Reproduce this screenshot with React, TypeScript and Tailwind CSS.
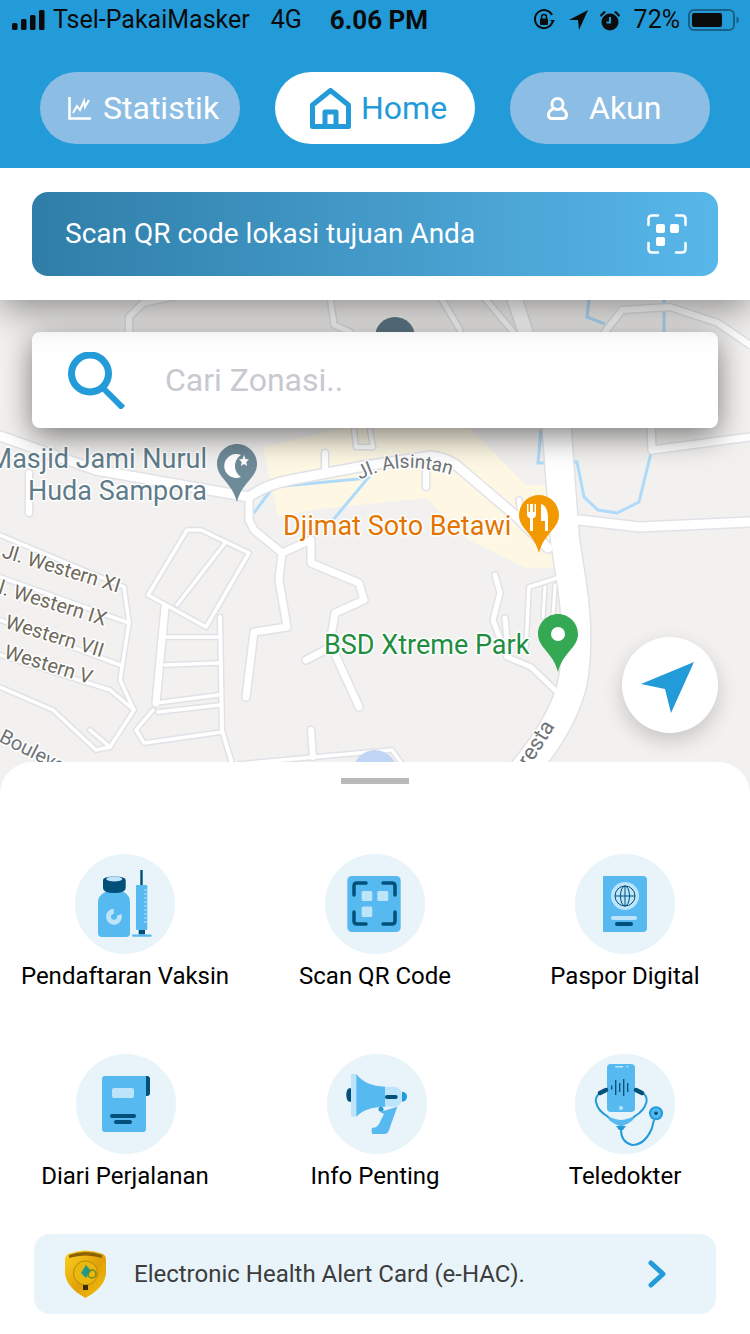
import React from "react";

const BLUE = "#239bd9";
const MID = "#56b9f0";
const DARK = "#01507a";
const LIGHT = "#bde4fb";

type Road = { d: string; w: number };
const roads: Road[] = [
  { d: "M0 436 L96 470 L249 497 Q265 485 290 480 L364 466 L431 456 Q450 458 462 470 L517 517 L548 548", w: 9 },
  { d: "M249 497 L249 520 L254 530 L282 553 L279 580 L287 627 L254 632 L246 697", w: 7 },
  { d: "M282 553 L311 540 L311 563 L359 583 L364 600 L335 613 L330 643 L359 707", w: 7 },
  { d: "M306 660 L335 645", w: 7 },
  { d: "M579 520 L640 527 L750 522", w: 9 },
  { d: "M650 395 L652 450 L750 437", w: 7 },
  { d: "M201 530 L249 553 L206 627 L148 595 L187 530 Z", w: 3.5 },
  { d: "M225 543 L177 605", w: 3.5 },
  { d: "M220 617 L222 730 L234 770", w: 4 },
  { d: "M165 607 L156 703", w: 7 },
  { d: "M165 637 L218 637", w: 3.5 },
  { d: "M165 665 L218 663", w: 3.5 },
  { d: "M156 703 L218 695", w: 3.5 },
  { d: "M158 712 L220 705", w: 3.5 },
  { d: "M153 710 L136 730 L144 743 L222 732", w: 3.5 },
  { d: "M124 587 L129 623 L120 680 L134 710 L110 747 L90 730", w: 3.5 },
  { d: "M0 687 L53 710 L96 750 L110 747", w: 3.5 },
  { d: "M110 690 L134 710", w: 3.5 },
  { d: "M0 535 L124 587", w: 3.5 },
  { d: "M0 577 L129 623", w: 3.5 },
  { d: "M0 620 L120 665", w: 3.5 },
  { d: "M0 655 L110 690", w: 3.5 },
  { d: "M239 764 L392 750 L402 764", w: 3.5 },
  { d: "M311 730 L313 757", w: 6 },
  { d: "M495 575 L500 593 L493 620 L507 657 L531 667 L555 690", w: 5 },
  { d: "M505 618 L507 640", w: 5 },
  { d: "M529 587 L526 647", w: 3.5 },
  { d: "M529 587 L560 577", w: 3.5 },
  { d: "M545 587 L543 617", w: 3 },
  { d: "M555 585 L553 617", w: 3 },
  { d: "M129 340 L129 317 L143 303 L175 296", w: 6 },
  { d: "M330 296 L334 325 L350 332", w: 5 },
  { d: "M440 296 L460 330", w: 5 },
  { d: "M483 296 L520 340", w: 5 },
  { d: "M605 332 L622 310 L670 307 L718 323 L750 345", w: 6 },
  { d: "M354 430 L356 447 L373 447 L370 430", w: 4 },
  { d: "M325 453 L325 467", w: 6 },
  { d: "M426 467 L426 487", w: 6 },
  { d: "M29 473 L29 513", w: 6 },
  { d: "M519 500 L522 520", w: 5 },
  { d: "M515 300 L548 400", w: 14 },
  { d: "M556 420 L565 540 L572 585 Q580 640 573 680 Q565 722 520 775", w: 28 },
];

const Pin = ({ x, y, fill, children }: { x: number; y: number; fill: string; children?: React.ReactNode }) => (
  <g transform={`translate(${x} ${y})`}>
    <path d="M20 0C9 0 0 9 0 20C0 34 15 38 20 58C25 38 40 34 40 20C40 9 31 0 20 0Z" fill={fill} />
    {children}
  </g>
);

const labelStyle = { paintOrder: "stroke", stroke: "#fff", strokeWidth: 3, strokeLinejoin: "round" } as const;

const MapArt = () => (
  <svg className="absolute inset-0 h-full w-full" viewBox="0 300 750 494" fill="none">
    <defs>
      <path id="alsintan" d="M360 480 Q400 458 455 476" />
    </defs>
    <path d="M263 447L344 428H469L526 485H548L557 568H526L469 540L426 498L311 510L278 517Z" fill="#fdf7e4" />
    <path d="M541 430L538 463L577 462L584 497L598 510L617 513L639 502L651 453" stroke="#aedbfb" strokeWidth="3" />
    <path d="M254 513L273 487L368 478L333 520" stroke="#aedbfb" strokeWidth="3" />
    <path d="M589 300L587 317L605 324M664 300V340" stroke="#aedbfb" strokeWidth="3" />
    {roads.map((r, i) => (
      <path key={`o${i}`} d={r.d} stroke="#e1e2e7" strokeWidth={r.w + 3} strokeLinecap="round" strokeLinejoin="round" />
    ))}
    {roads.map((r, i) => (
      <path key={`i${i}`} d={r.d} stroke="#fff" strokeWidth={r.w} strokeLinecap="round" strokeLinejoin="round" />
    ))}
    <circle cx="375" cy="772" r="22" fill="#c0d5f3" />
    <circle cx="395" cy="337" r="20" fill="#5f7a88" />

    <Pin x={217} y={444} fill="#6f8a98">
      <path d="M24 11A12 12 0 1 0 24 33A13 13 0 0 1 24 11Z" fill="#fff" />
      <path d="M27 11L28.500 15L32 15.500L29.300 18L30 22L27 20L24 22L24.700 18L22 15.500L25.500 15Z" fill="#fff" />
    </Pin>
    <Pin x={519} y={495} fill="#f29900">
      <path d="M8 9V19Q8 23 11 23V36H14V23Q17 23 17 19V9H15.500V17H14V9H11V17H9.500V9Z" fill="#fff" />
      <path d="M22 9Q29 11 29 24V36H26V26H22Z" fill="#fff" />
    </Pin>
    <Pin x={538} y={614} fill="#34a853">
      <circle cx="20" cy="20" r="7" fill="#fff" />
    </Pin>

    <g fontFamily="Roboto, sans-serif">
      <text x="207" y="468" textAnchor="end" fontSize="27" fill="#5f7c8a" style={labelStyle}>Masjid Jami Nurul</text>
      <text x="207" y="500" textAnchor="end" fontSize="27" fill="#5f7c8a" style={labelStyle}>Huda Sampora</text>
      <text x="283" y="535" fontSize="27" fill="#e37400" style={labelStyle}>Djimat Soto Betawi</text>
      <text x="324" y="654" fontSize="27" fill="#1e8e3e" style={labelStyle}>BSD Xtreme Park</text>
      <text fontSize="19" fill="#6e7478" style={labelStyle}>
        <textPath href="#alsintan">Jl. Alsintan</textPath>
      </text>
      <text transform="translate(1 557) rotate(17)" fontSize="20" fill="#6f6a5c" style={labelStyle}>Jl. Western XI</text>
      <text transform="translate(-13 590) rotate(17)" fontSize="20" fill="#6f6a5c" style={labelStyle}>Jl. Western IX</text>
      <text transform="translate(-21 620) rotate(17)" fontSize="20" fill="#6f6a5c" style={labelStyle}>Jl. Western VII</text>
      <text transform="translate(-22 650) rotate(17)" fontSize="20" fill="#6f6a5c" style={labelStyle}>Jl. Western V</text>
      <text transform="translate(-2 741) rotate(27)" fontSize="20" fill="#6e7478" style={labelStyle}>Boulevard</text>
      <text transform="translate(529 768) rotate(-58)" fontSize="22" fill="#6e7478" style={labelStyle}>resta</text>
    </g>
  </svg>
);

const Vaksin = () => (
  <svg viewBox="0 0 100 100" className="h-full w-full">
    <path d="M30 38H49Q55 42 55 48V79Q55 83 51 83H27Q23 83 23 79V48Q23 42 30 38Z" fill={MID} />
    <path d="M28 26Q28 22.500 39.300 22.500Q50.700 22.500 50.700 26V34Q50.700 39 39.300 39Q28 39 28 34Z" fill={DARK} />
    <ellipse cx="39.300" cy="25" rx="8" ry="2.500" fill={LIGHT} />
    <circle cx="39" cy="62.700" r="5.500" fill="none" stroke={LIGHT} strokeWidth="5" strokeDasharray="27 8" transform="rotate(-20 39 62.700)" />
    <rect x="65.300" y="16" width="2.400" height="16" fill={DARK} />
    <rect x="61" y="31" width="11.300" height="45" rx="1" fill={MID} />
    <path d="M69 36H72.300M69 40H72.300M69 44H72.300M69 48H72.300M69 52H72.300M69 56H72.300M69 60H72.300M69 64H72.300M69 68H72.300" stroke={LIGHT} strokeWidth="1" />
    <rect x="63.700" y="76" width="6.300" height="4.500" fill={DARK} />
    <rect x="57" y="80.500" width="19.700" height="2.200" rx="1" fill={MID} />
  </svg>
);

const Qr = () => (
  <svg viewBox="0 0 100 100" className="h-full w-full">
    <rect x="22.300" y="22" width="53.400" height="56" rx="4.500" fill={MID} />
    <path d="M29 41V32Q29 29 32 29H41M58 29H67Q70 29 70 32V41M29 58V67Q29 70 32 70H41M58 70H67Q70 70 70 67V58" fill="none" stroke={DARK} strokeWidth="3.500" strokeLinecap="round" />
    <rect x="36.700" y="37" width="10.600" height="10" rx="1.500" fill={LIGHT} />
    <rect x="52.300" y="37" width="11" height="10" rx="1.500" fill={LIGHT} />
    <rect x="36.700" y="52.500" width="10.600" height="10.500" rx="1.500" fill={LIGHT} />
  </svg>
);

const Paspor = () => (
  <svg viewBox="0 0 100 100" className="h-full w-full">
    <path d="M28 22H68Q72 22 72 26V74Q72 78 68 78H28Z" fill={MID} />
    <circle cx="50" cy="42" r="14" fill={LIGHT} />
    <g fill="none" stroke={DARK} strokeWidth="1">
      <circle cx="50" cy="42" r="10" />
      <ellipse cx="50" cy="42" rx="4.500" ry="10" />
      <path d="M40 42H60M50 32V52" />
    </g>
    <rect x="36" y="62" width="26" height="4" rx="2" fill={LIGHT} />
    <rect x="40" y="68" width="18" height="4" rx="2" fill={DARK} />
  </svg>
);

const Diari = () => (
  <svg viewBox="0 0 100 100" className="h-full w-full">
    <path d="M68 22H71Q74 22 74 25V39Q74 42 71 42H68Z" fill={DARK} />
    <path d="M29 22H70V75Q70 78 67 78H29Q26 78 26 75V25Q26 22 29 22Z" fill={MID} />
    <rect x="36" y="34" width="22" height="10" rx="2" fill={LIGHT} />
    <rect x="34" y="60" width="26" height="4" rx="2" fill={DARK} />
    <rect x="38" y="66" width="18" height="4" rx="2" fill={DARK} />
  </svg>
);

const Info = () => (
  <svg viewBox="0 0 100 100" className="h-full w-full">
    <path d="M24 34.300H22Q19.300 36 19.300 41Q19.300 46 22 47.700H24Z" fill={DARK} />
    <rect x="24" y="20" width="5.300" height="42.700" fill={LIGHT} />
    <path d="M29.300 20Q38 32 58 32.700V52.700Q38 53 29.300 62.700Z" fill={MID} />
    <path d="M58 32.700H67Q75 33 75 42.700Q75 52.700 67 52.700H58Z" fill={LIGHT} />
    <rect x="58" y="41" width="12.700" height="4" rx="2" fill={DARK} />
    <path d="M75 37.700A5 5 0 0 1 75 47.700Z" fill={BLUE} />
    <path d="M53 58L70.300 52.700L62 76Q61 80 57 80H46Q44.700 80 44.700 78V75Q44.700 73.700 46 73.700Q50 73.700 52 70L57 60Z" fill={MID} />
    <circle cx="54" cy="55.300" r="2.500" fill={BLUE} />
  </svg>
);

const Tele = () => (
  <svg viewBox="0 0 100 100" className="h-full w-full">
    <rect x="32" y="10" width="28" height="48" rx="4" fill={MID} />
    <rect x="40" y="12" width="8.300" height="1.500" rx="0.700" fill={LIGHT} />
    <circle cx="52.500" cy="12.700" r="0.900" fill={LIGHT} />
    <path d="M36.700 31.500V35.500M40.700 26V41M44.700 29V38M48.700 25V42M52.700 29V38" stroke={DARK} strokeWidth="1.300" />
    <circle cx="46" cy="54" r="2" fill={LIGHT} />
    <path d="M25 39Q20 43 21 48Q23 57 32 62Q38 68 46 71Q54 68 60 62Q69 57 71.500 48Q72.500 43 68 39" fill="none" stroke={BLUE} strokeWidth="2" />
    <path d="M33 62Q38 65 46 66Q54 65 59 62L58 66Q52 71 46 72Q40 71 34 66Z" fill={MID} />
    <path d="M41 72H51L48 76H44Z" fill={BLUE} />
    <path d="M46 76Q46 88 57 91Q70 91 77 74L79 66" fill="none" stroke={BLUE} strokeWidth="2" />
    <path d="M25 39L31 36" stroke={DARK} strokeWidth="4.500" strokeLinecap="round" />
    <path d="M67 39L61 36" stroke={DARK} strokeWidth="4.500" strokeLinecap="round" />
    <circle cx="81" cy="59.300" r="7" fill={BLUE} />
    <circle cx="81" cy="59.300" r="5" fill={MID} />
    <circle cx="81" cy="59.300" r="1.800" fill={DARK} />
  </svg>
);

const items = [
  { label: "Pendaftaran Vaksin", Icon: Vaksin, shift: "" },
  { label: "Scan QR Code", Icon: Qr, shift: "" },
  { label: "Paspor Digital", Icon: Paspor, shift: "" },
  { label: "Diari Perjalanan", Icon: Diari, shift: "ml-[2px]" },
  { label: "Info Penting", Icon: Info, shift: "ml-[4px]" },
  { label: "Teledokter", Icon: Tele, shift: "" },
];

export default function App() {
  return (
    <div className="flex h-[1334px] w-[750px] flex-col overflow-hidden bg-white font-['Roboto',sans-serif]">
      <header className="relative z-20 h-[168px] bg-[#239bd9]">
        <div className="flex h-10 items-center pl-3 pr-[11px] text-[25px] text-[#0b0b0b]">
          <svg width="33" height="20" viewBox="0 0 33 20" fill="#0b0b0b">
            <rect x="0" y="13" width="5.500" height="7" rx="1.500" />
            <rect x="9" y="9" width="5.500" height="11" rx="1.500" />
            <rect x="18" y="5" width="5.500" height="15" rx="1.500" />
            <rect x="27" y="0" width="5.500" height="20" rx="1.500" />
          </svg>
          <span className="ml-2">Tsel-PakaiMasker</span>
          <span className="ml-[21px]">4G</span>
          <span className="ml-[28px] text-[26px] font-bold">6.06 PM</span>
          <div className="ml-auto flex items-center">
            <svg width="22" height="22" viewBox="0 0 22 22" fill="none" stroke="#0b0b0b" strokeWidth="2">
              <path d="M19.500 13A9 9 0 1 1 19 6" />
              <path d="M17 11L20 14L22 11" fill="#0b0b0b" stroke="none" />
              <rect x="7" y="9.500" width="8" height="6.500" rx="1" fill="#0b0b0b" stroke="none" />
              <path d="M8.500 10V8A2.500 2.500 0 0 1 13.500 8V10" strokeWidth="1.500" />
            </svg>
            <svg className="ml-[14px]" width="19" height="20" viewBox="0 0 19 20" fill="#0b0b0b">
              <path d="M19 0L10 20L9 10L0 10Z" />
            </svg>
            <svg className="ml-3" width="20" height="21" viewBox="0 0 20 21" fill="#0b0b0b">
              <circle cx="10" cy="12" r="8.500" />
              <path d="M10 7V12.500H6.500" fill="none" stroke="#239bd9" strokeWidth="2" />
              <path d="M0 5L4 1L6 2L1 7ZM20 5L16 1L14 2L19 7Z" />
            </svg>
            <span className="ml-[14px]">72%</span>
            <svg className="ml-2" width="51" height="22" viewBox="0 0 51 22" fill="none">
              <rect x="1" y="1" width="45" height="20" rx="5" stroke="#1a5f86" strokeWidth="2" />
              <rect x="4" y="4" width="30" height="14" rx="2" fill="#0b0b0b" />
              <path d="M48.500 7.500Q51 9 51 11Q51 13 48.500 14.500Z" fill="#1a5f86" />
            </svg>
          </div>
        </div>
        <nav className="mt-8 flex justify-between px-10 text-[32px]">
          <div className="flex h-[72px] w-[200px] items-center gap-3 rounded-full bg-[#8cbde4] pl-[28px] text-white">
            <svg width="23" height="23" viewBox="0 0 23 23" fill="none" stroke="#fff" strokeWidth="2.500">
              <path d="M1.500 0V21.500H23" />
              <path d="M5 16L9 9L12 13L16 4L17 10L21 3" strokeWidth="2" />
            </svg>
            <span>Statistik</span>
          </div>
          <div className="flex h-[72px] w-[200px] items-center gap-[10px] rounded-full bg-white pl-[35px] text-[#239bd9]">
            <svg width="41" height="41" viewBox="0 0 41 41" fill="none" stroke="#239bd9" strokeWidth="5" strokeLinejoin="round">
              <path d="M2.500 17L20.500 2.500L38.500 17V38.500H2.500Z" />
              <path d="M15 38.500V24H26V38.500" fill="none" strokeWidth="5" />
            </svg>
            <span>Home</span>
          </div>
          <div className="flex h-[72px] w-[200px] items-center gap-[21px] rounded-full bg-[#8cbde4] pl-[37px] text-white">
            <svg width="21" height="23" viewBox="0 0 21 23" fill="none" stroke="#fff" strokeWidth="3">
              <ellipse cx="10.500" cy="7" rx="5.500" ry="5.500" />
              <path d="M6 12Q1.500 14 1.500 18Q1.500 21.500 5 21.500H16Q19.500 21.500 19.500 18Q19.500 14 15 12" />
            </svg>
            <span>Akun</span>
          </div>
        </nav>
      </header>

      <section className="relative z-10 h-[132px] bg-white px-8 pt-6 shadow-[0_8px_36px_rgba(0,0,0,0.45)]">
        <div className="flex h-[84px] items-center justify-between rounded-2xl bg-gradient-to-r from-[#2f7ea8] to-[#58b7ea] pl-[33px] pr-[31px]">
          <span className="text-[28px] text-white">Scan QR code lokasi tujuan Anda</span>
          <svg width="40" height="40" viewBox="0 0 40 40" fill="none" stroke="#fff" strokeWidth="2.500" strokeLinecap="round">
            <path d="M1.500 11V5Q1.500 1.500 5 1.500H11M29 1.500H35Q38.500 1.500 38.500 5V11M1.500 29V35Q1.500 38.500 5 38.500H11M29 38.500H35Q38.500 38.500 38.500 35V29" />
            <rect x="9" y="10" width="9" height="9" rx="2" fill="#fff" stroke="none" />
            <rect x="23" y="10" width="9" height="9" rx="2" fill="#fff" stroke="none" />
            <rect x="9" y="23" width="9" height="9" rx="2" fill="#fff" stroke="none" />
          </svg>
        </div>
      </section>

      <section className="relative h-[494px] shrink-0 bg-[#f2f1ef] px-8 pt-8">
        <MapArt />
        <div className="relative flex h-24 items-center rounded-lg bg-white pl-9 shadow-[0_8px_30px_rgba(0,0,0,0.5)]">
          <svg width="57" height="57" viewBox="0 0 57 57" fill="none" stroke="#239bd9">
            <circle cx="22" cy="21.500" r="18.500" strokeWidth="7" />
            <path d="M35 36L55 56" strokeWidth="6" />
          </svg>
          <span className="ml-10 text-[32px] text-[#c8c8cf]">Cari Zonasi..</span>
        </div>
        <button className="absolute left-[622px] top-[337px] flex h-24 w-24 items-center justify-center rounded-full bg-white shadow-[0_8px_20px_rgba(0,0,0,0.18)]">
          <svg width="96" height="96" viewBox="0 0 96 96">
            <path d="M72 25L19 47L43 52L49 76Z" fill="#239bd9" />
          </svg>
        </button>
      </section>

      <section className="relative z-10 -mt-8 flex-1 rounded-t-[32px] bg-white">
        <div className="mx-auto mt-4 h-[6px] w-[68px] bg-[#b9b9b9]" />
        <div className="mt-[70px] grid grid-cols-3 gap-y-[59px]">
          {items.map(({ label, Icon, shift }) => (
            <div key={label} className="flex flex-col items-center">
              <div className={`h-[100px] w-[100px] rounded-full bg-[#e8f4f9] ${shift}`}>
                <Icon />
              </div>
              <span className="mt-1 h-[37px] text-[24px] leading-[37px] text-black">{label}</span>
            </div>
          ))}
        </div>
        <div className="mx-[34px] mt-[39px] flex h-20 items-center rounded-2xl bg-[#e8f4f9] pl-[31px] pr-[50px]">
          <svg width="41" height="48" viewBox="0 0 41 48">
            <defs>
              <linearGradient id="gold" x1="0" y1="0" x2="1" y2="1">
                <stop offset="0" stopColor="#ffd21f" />
                <stop offset="0.55" stopColor="#e0a008" />
                <stop offset="1" stopColor="#f7c20f" />
              </linearGradient>
            </defs>
            <path d="M3 4Q20.500 -3 38 4Q41 6 41 10V24Q39 38 20.500 48Q2 38 0 24V10Q0 6 3 4Z" fill="url(#gold)" />
            <path d="M4 5Q20.500 -1 37 5V8Q20.500 3 4 8Z" fill="#8a6200" />
            <circle cx="20.500" cy="23" r="12" fill="#eab70f" stroke="#b98b08" strokeWidth="1" />
            <path d="M21 15L26 21L21 28L16 23Z" fill="#1c9a8c" />
            <circle cx="27" cy="24" r="4" fill="none" stroke="#6d8a1e" strokeWidth="1.500" />
            <rect x="18" y="35" width="5" height="5" fill="#3a2c05" />
          </svg>
          <span className="ml-[28px] text-[24px] text-[#3c3c3c]">Electronic Health Alert Card (e-HAC).</span>
          <svg className="ml-auto" width="18" height="28" viewBox="0 0 18 28" fill="none" stroke="#239bd9" strokeWidth="5" strokeLinecap="round" strokeLinejoin="round">
            <path d="M3 3L15 14L3 25" />
          </svg>
        </div>
      </section>
    </div>
  );
}
